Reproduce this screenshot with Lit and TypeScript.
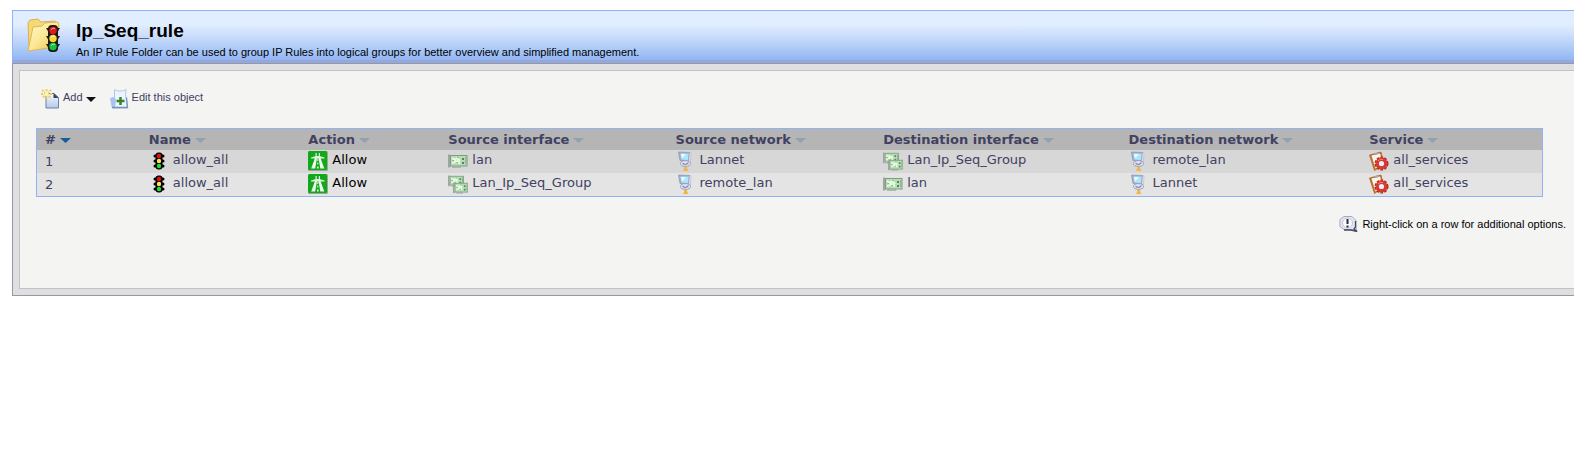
import { LitElement, html, svg, css, nothing } from "lit";
import { customElement, property, state } from "lit/decorators.js";
import { classMap } from "lit/directives/class-map.js";

type IconName = "rule" | "allow" | "nic" | "group" | "network" | "service";

interface Cell {
  icon: IconName;
  text: string;
}

interface Rule {
  index: number;
  name: Cell;
  action: Cell;
  rest: Cell[];
}

const lights = svg`
  <path d="M4 4h8M4 9h8M4 14h8" stroke="#000" stroke-width="3" stroke-linecap="round"/>
  <rect x="4.500" y="0.500" width="7" height="17" rx="3" fill="#000"/>
  <circle cx="8" cy="4" r="2.200" fill="#e81010"/>
  <circle cx="8" cy="9" r="2.200" fill="#ffe060"/>
  <circle cx="8" cy="14" r="2.200" fill="#20e030"/>`;

const card = svg`
  <path d="M1 0.500v13" stroke="#a3a3a6" stroke-width="2"/>
  <rect x="2.500" y="1.500" width="16.500" height="10.500" fill="#b4dfb2" stroke="#7f9c82"/>
  <path d="M4 13h9" stroke="#a3aaa4" stroke-width="1.500"/>
  <path d="M4 4l3 2 2-2 3 3M4 9l3-1 2-1 3 2.500" fill="none" stroke="#ecfbe6" stroke-width="1.800"/>
  <path d="M4.500 6.500h1.500M8.500 8.500h1.500M9 3.500h1.500" stroke="#74b87a" stroke-width="1.200"/>
  <path d="M14 4h2v2h-2zM14 8h2v2h-2z" fill="#5c7f61"/>
  <path d="M17.700 3v7" stroke="#8fab91"/>`;

const icons = {
  rule: svg`<g transform="translate(2 1)">${lights}</g>`,
  allow: svg`
    <rect x="0" y="0" width="20" height="20" rx="1.500" fill="#9aa59a"/>
    <rect x="0" y="0" width="19" height="19" rx="1.500" fill="#11a91a"/>
    <path d="M7.500 2h1.200v3H7.500zM10.800 2H12v3h-1.200zM3 6.500L8 5h3.500l5 1.500V7.500H3z" fill="#dff5df"/>
    <path d="M7 7h2L7.200 17.500H3.200zM10.500 7h2l3.800 10.500h-4z" fill="#eefaee"/>
    <path d="M9.300 8h1v2h-1zM9.300 11.500h1v2h-1zM9 15.500h1.600v2H9z" fill="#eefaee"/>`,
  nic: svg`<g transform="translate(0 3)">${card}</g>`,
  group: svg`
    <g transform="translate(0 1) scale(.82 .84)">${card}</g>
    <g transform="translate(5 8) scale(.78 .84)">${card}</g>`,
  network: svg`
    <path d="M2.500 1l11.500 .5-1 9-9-1z" fill="#a5b1cd" stroke="#8792ae" stroke-width=".7"/>
    <path d="M4.500 2.500l8 .3-.7 6.200-6.300-.5z" fill="#a9e8fb"/>
    <path d="M5 3l5 .2-4 4z" fill="#ecfdff"/>
    <path d="M13.500 1.500l1.500 1-.7 9-1.500-1z" fill="#e6e9f4" stroke="#a4aac4" stroke-width=".5"/>
    <ellipse cx="9.500" cy="12.500" rx="5" ry="2.800" fill="#e3e6f2" stroke="#999fc0"/>
    <path d="M6.500 12q3 3 6-.5" fill="none" stroke="#8787bd" stroke-width="1.200"/>
    <path d="M9.500 15v2" stroke="#b9a98e" stroke-width="1.800"/>
    <path d="M8.700 16h2l1.500 4h-5z" fill="#f4b63c"/>`,
  service: svg`
    <path d="M.5 4L12 1l3 12-9.500 6.500z" fill="#c5782a" stroke="#a65e20" stroke-width=".7"/>
    <path d="M2.500 4.500L11 2.500l3 10-7.500 5z" fill="#f8f4ee"/>
    <path d="M5 2.500l4-1.500.8 2-4 1.200z" fill="#a7a7ad"/>
    <circle cx="12.500" cy="12.500" r="6" fill="none" stroke="#b52620" stroke-width="2" stroke-dasharray="2.600 1.200"/>
    <circle cx="12.500" cy="12.500" r="4.300" fill="#e4f1fb" stroke="#d63a31" stroke-width="3.400"/>
    <path d="M9 10q2-2.500 5-1.500" fill="none" stroke="#f0837a" stroke-width="1"/>`,
};

const RULES: Rule[] = [
  {
    index: 1,
    name: { icon: "rule", text: "allow_all" },
    action: { icon: "allow", text: "Allow" },
    rest: [
      { icon: "nic", text: "lan" },
      { icon: "network", text: "Lannet" },
      { icon: "group", text: "Lan_Ip_Seq_Group" },
      { icon: "network", text: "remote_lan" },
      { icon: "service", text: "all_services" },
    ],
  },
  {
    index: 2,
    name: { icon: "rule", text: "allow_all" },
    action: { icon: "allow", text: "Allow" },
    rest: [
      { icon: "group", text: "Lan_Ip_Seq_Group" },
      { icon: "network", text: "remote_lan" },
      { icon: "nic", text: "lan" },
      { icon: "network", text: "Lannet" },
      { icon: "service", text: "all_services" },
    ],
  },
];

const COLUMNS = [
  { label: "#", width: 6.9 },
  { label: "Name", width: 10.6 },
  { label: "Action", width: 9.3 },
  { label: "Source interface", width: 15.1 },
  { label: "Source network", width: 13.8 },
  { label: "Destination interface", width: 16.3 },
  { label: "Destination network", width: 16 },
  { label: "Service", width: 12 },
];

@customElement("folder-header")
class FolderHeader extends LitElement {
  @property() heading = "";
  @property() description = "";

  static styles = css`
    :host {
      display: block;
    }
    .bar {
      display: flex;
      align-items: center;
      gap: 13px;
      padding: 5px 13px;
      border: solid #92b2f6;
      border-width: 1px 0 0 1px;
      background: linear-gradient(#e1eeff 0 26%, #cfdffc 45%, #a9c8f6 75%, #94b4f4 94%, #94a8e0 94%);
    }
    .folder {
      flex: none;
      width: 37px;
      height: 39px;
    }
    .heading {
      margin: 0;
      font: bold 19px/30px "Liberation Sans Narrow", "Arial Narrow", "Liberation Sans", sans-serif;
    }
    .description {
      margin: 0;
      font-size: 11px;
      line-height: 12px;
    }
  `;

  render() {
    return html`
      <header class="bar">
        <svg class="folder" viewBox="0 0 37 39" aria-hidden="true">
          <defs>
            <linearGradient id="paper" x2="1" y2="1">
              <stop offset="0" stop-color="#fffbd0" />
              <stop offset=".5" stop-color="#fce793" />
              <stop offset="1" stop-color="#eebd43" />
            </linearGradient>
          </defs>
          <path d="M2 5l2-3 8-1 3 3 14-1 3 3-2 22-24 4-3-2z" fill="#f6d875" stroke="#d9b052" />
          <path d="M7 9l9-1 3-3 13-1 1 3-4 22-27 4z" fill="url(#paper)" stroke="#e0b658" />
          <path d="M20 10h14l-3 5h-8zM20 18h14l-3 5h-8zM20 26h14l-3 5h-8z" fill="#222" />
          <rect x="22" y="7" width="10" height="27" rx="4" fill="#1a1a1a" />
          <circle cx="27" cy="12.500" r="3.700" fill="#df1a1d" />
          <circle cx="27" cy="20.500" r="3.700" fill="#fbd631" />
          <circle cx="27" cy="28.500" r="3.700" fill="#17c33e" />
          <path d="M25 11.500q2-2 4-1M25 19.500q2-2 4-1M25 27.500q2-2 4-1" fill="none" stroke="#fff" stroke-opacity=".6" />
        </svg>
        <div>
          <h1 class="heading">${this.heading}</h1>
          <p class="description">${this.description}</p>
        </div>
      </header>
    `;
  }
}

@customElement("rule-toolbar")
class RuleToolbar extends LitElement {
  static styles = css`
    :host {
      display: flex;
      gap: 14px;
      padding-left: 5px;
    }
    .tool {
      display: flex;
      align-items: flex-start;
      gap: 3px;
      padding: 0;
      border: 0;
      background: none;
      color: #414161;
      font: 11px/16px "Liberation Sans", Arial, sans-serif;
      text-decoration: none;
      cursor: pointer;
    }
    .icon {
      width: 19px;
      height: 20px;
    }
    .caret {
      width: 10px;
      height: 5px;
      margin-top: 8px;
    }
  `;

  render() {
    return html`
      <button class="tool" type="button" aria-haspopup="menu">
        <svg class="icon" viewBox="0 0 19 20" aria-hidden="true">
          <defs>
            <linearGradient id="sheet" x2="0" y2="1">
              <stop offset="0" stop-color="#f6f8fc" />
              <stop offset="1" stop-color="#b4c9ea" />
            </linearGradient>
          </defs>
          <path d="M5 4.500h8l4.500 4v10.500H5z" fill="url(#sheet)" stroke="#6f819e" />
          <path d="M12.500 4v5h5z" fill="#34445c" />
          <path d="M5.500 0v10M1 1l9 8M10 1L1 9M0 5h11" stroke="#eecb4d" stroke-width="1.800" stroke-dasharray="2 1" />
          <circle cx="5.500" cy="5" r="2" fill="#fff6b5" />
        </svg>
        <span>Add</span>
        <svg class="caret" viewBox="0 0 10 5" aria-hidden="true"><path d="M0 0h10L5 5z" fill="#111" /></svg>
      </button>
      <a class="tool" href="#edit">
        <svg class="icon" viewBox="0 0 19 20" aria-hidden="true">
          <path d="M4.500 .5l3 1.500h5l3.500-1.500-.5 5 2 13.500h-15l-2-9.500 4-1z" fill="#edf4ff" stroke="#b4c6e8" />
          <path d="M.5 9l4-1 1.500 3-1 8H2z" fill="#a9c2f0" />
          <path d="M2 18.500h15.500l-1-10" fill="none" stroke="#7590bd" stroke-width="1.300" />
          <path d="M10.500 8v8M6.500 12h8" stroke="#358524" stroke-width="2.500" />
        </svg>
        <span>Edit this object</span>
      </a>
    `;
  }
}

@customElement("rule-table")
class RuleTable extends LitElement {
  @property({ attribute: false }) rules: Rule[] = [];
  @state() private sorted = "#";

  static styles = css`
    :host {
      display: block;
    }
    .table {
      width: 100%;
      table-layout: fixed;
      border: 1px solid #92b2f6;
      border-spacing: 0;
      color: #414161;
      font: 13px/18px Verdana, "DejaVu Sans", sans-serif;
    }
    .head {
      height: 21px;
      padding: 0 0 0 8px;
      background: #b5b5b5;
      text-align: left;
    }
    .sort {
      display: flex;
      align-items: center;
      gap: 4px;
      padding: 0;
      border: 0;
      background: none;
      color: inherit;
      font: bold 13px/18px Verdana, "DejaVu Sans", sans-serif;
      white-space: nowrap;
      cursor: pointer;
    }
    .caret {
      width: 11px;
      height: 5px;
      margin-top: 2px;
      fill: #93a1ae;
    }
    .active .caret {
      fill: #175b98;
    }
    .cell {
      height: 23px;
      padding: 0 0 0 8px;
      background: #d7d7d7;
    }
    .row:nth-child(even) .cell {
      background: #e4e4e4;
    }
    .entry {
      display: flex;
      gap: 4px;
      height: 21px;
      color: inherit;
      text-decoration: none;
      white-space: nowrap;
    }
    .plain {
      color: #000;
    }
    .icon {
      flex: none;
      width: 20px;
      height: 20px;
    }
  `;

  private icon(name: IconName) {
    return html`<svg class="icon" viewBox="0 0 20 20" fill="none" aria-hidden="true">${icons[name]}</svg>`;
  }

  private link(cell: Cell) {
    return html`<td class="cell">
      <a class="entry" href="#${cell.text}">${this.icon(cell.icon)}<span>${cell.text}</span></a>
    </td>`;
  }

  render() {
    return html`
      <table class="table">
        <colgroup>
          ${COLUMNS.map((c) => html`<col style="width:${c.width}%" />`)}
        </colgroup>
        <thead>
          <tr>
            ${COLUMNS.map(
              (c) => html`<th class="head" scope="col" aria-sort=${c.label === this.sorted ? "ascending" : nothing}>
                <button
                  type="button"
                  class=${classMap({ sort: true, active: c.label === this.sorted })}
                  @click=${() => (this.sorted = c.label)}
                >
                  ${c.label}
                  <svg class="caret" viewBox="0 0 11 5" aria-hidden="true"><path d="M0 0h11L5.500 5z" /></svg>
                </button>
              </th>`
            )}
          </tr>
        </thead>
        <tbody>
          ${this.rules.map(
            (r) => html`<tr class="row">
              <td class="cell">${r.index}</td>
              ${this.link(r.name)}
              <td class="cell"><span class="entry plain">${this.icon(r.action.icon)}<span>${r.action.text}</span></span></td>
              ${r.rest.map((c) => this.link(c))}
            </tr>`
          )}
        </tbody>
      </table>
    `;
  }
}

@customElement("app-root")
class AppRoot extends LitElement {
  static styles = css`
    :host {
      display: block;
      padding: 10px 0 0 12px;
      background: #fff;
      color: #000;
      font: 11px/16px "Liberation Sans", Arial, sans-serif;
    }
    .frame {
      padding: 6px 0 6px 6px;
      border: solid #98989c;
      border-width: 1px 0 1px 1px;
      background: #dfdee3;
    }
    .panel {
      display: flex;
      flex-direction: column;
      padding: 18px 31px 56px 16px;
      border: solid #c4c4bf;
      border-width: 1px 0 1px 1px;
      background: #f4f4f2;
    }
    .toolbar {
      margin-bottom: 19px;
    }
    .hint {
      display: flex;
      align-items: center;
      align-self: flex-end;
      gap: 4px;
      margin: 19px -23px 0 0;
    }
    .balloon {
      width: 19px;
      height: 16px;
    }
  `;

  render() {
    return html`
      <folder-header
        heading="Ip_Seq_rule"
        description="An IP Rule Folder can be used to group IP Rules into logical groups for better overview and simplified management."
      ></folder-header>
      <main class="frame">
        <section class="panel">
          <rule-toolbar class="toolbar"></rule-toolbar>
          <rule-table .rules=${RULES}></rule-table>
          <p class="hint">
            <svg class="balloon" viewBox="0 0 19 16" aria-hidden="true">
              <path d="M5 .5h8l4 4v7l1 4-6-2H5l-4-3v-7z" fill="#e5e7f2" stroke="#a5a9bd" />
              <path d="M16.500 5v6l-1.500 2 3 2.500-6-1.500H5" fill="none" stroke="#40485c" stroke-width="1.300" />
              <circle cx="8.500" cy="7" r="5" fill="#fbfbff" stroke="#c0c4d6" />
              <path d="M8.500 3v5M8.500 9.500v2" stroke="#252a3c" stroke-width="2" />
            </svg>
            <span>Right-click on a row for additional options.</span>
          </p>
        </section>
      </main>
    `;
  }
}
